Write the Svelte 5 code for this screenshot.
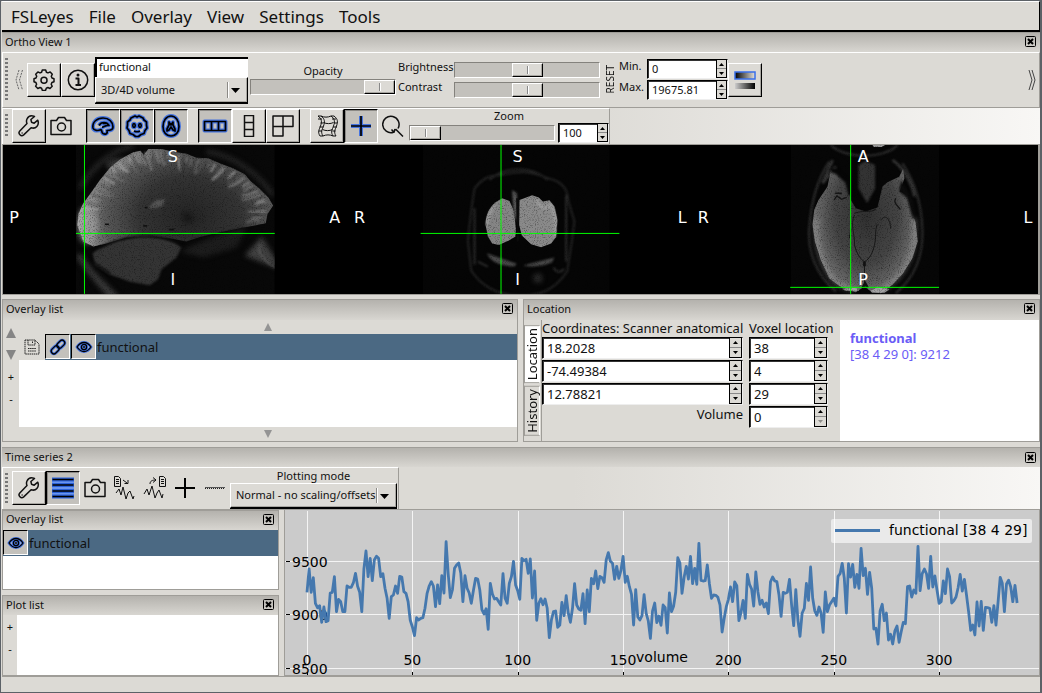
<script>
  const menus = ['FSLeyes', 'File', 'Overlay', 'View', 'Settings', 'Tools'];
  const coords = ['18.2028', '-74.49384', '12.78821'];
  const voxels = ['38', '4', '29', '0'];

  // Voxel intensity per volume, as trace depth in thirds of a plot unit
  const trace = [
    262,192,262,218,295,308,302,352,306,350,347,264,262,215,320,283,290,320,320,243,247,247,233,205,244,262,320,192,138,215,
    160,227,164,154,160,215,206,250,280,340,275,270,243,265,214,216,260,265,290,345,366,392,338,345,340,338,310,265,243,230,
    243,305,240,296,212,264,110,207,278,255,190,180,174,205,290,212,250,264,295,255,220,222,255,314,327,311,373,235,267,282,
    280,290,300,206,280,295,235,215,169,240,257,283,160,167,163,205,162,279,198,346,295,281,299,282,310,398,345,320,318,367,
    360,292,332,272,325,352,310,236,300,312,316,266,356,255,320,220,236,198,251,214,218,232,165,143,169,175,223,184,220,197,
    154,232,214,245,268,360,254,336,345,332,269,325,348,400,318,294,353,333,361,300,308,384,264,320,304,262,158,174,265,215,
    184,222,154,236,190,238,115,226,228,227,180,236,280,270,271,277,300,381,340,305,283,246,290,231,242,347,322,286,340,208,
    238,252,303,201,260,298,286,306,294,326,230,216,228,230,270,334,262,265,262,223,300,362,254,345,394,325,310,235,286,186,
    280,318,331,306,325,382,261,320,300,290,280,303,214,206,175,220,324,176,216,178,247,208,250,130,212,190,268,202,250,372,
    370,417,318,298,347,324,405,388,417,377,363,412,380,352,356,245,243,276,255,265,124,257,206,192,206,250,154,246,213,255,
    295,290,228,266,192,215,294,287,276,248,208,258,223,270,320,376,360,390,291,363,289,376,307,308,310,352,302,360,290,217,
    235,320,237,226,245,290,241,294
  ];
  const points = trace.map((d, i) => `${(22 + i * 2.107).toFixed(1)},${(d / 3 - 6).toFixed(1)}`).join(' ');
  const xTicks = [0, 50, 100, 150, 200, 250, 300];
  const yTicks = [[9500, 50], [9000, 103], [8500, 157]];

  // Cortical folds: streaks running inwards from the outline of a slice
  const sagittalRim = [[232,240],[236,205],[250,175],[270,150],[290,118],[312,90],[335,65],[360,44],[390,26],[420,17],[450,13],[485,14],[520,22],[550,28],[585,36],[620,40],[655,54],[690,68],[720,80],[745,100],[770,124],[792,150],[812,178],[800,210],[780,232]];
  function folds(rim, cx, cy, len) {
    const out = [];
    for (let i = 0; i < rim.length - 1; i++) {
      for (let k = 0; k < 3; k++) {
        const n = i * 3 + k;
        const t = (k + ((n * 7) % 5) / 6) / 3;
        const x = rim[i][0] + (rim[i + 1][0] - rim[i][0]) * t;
        const y = rim[i][1] + (rim[i + 1][1] - rim[i][1]) * t;
        const d = Math.hypot(cx - x, cy - y);
        const l = len * (0.3 + ((n * 37) % 17) / 17);
        const ux = (cx - x) / d;
        const uy = (cy - y) / d;
        const bend = ((n * 13) % 11) - 5;
        out.push({
          d: `M${x + ux * 6} ${y + uy * 6}q${ux * l * 0.5 - uy * bend} ${uy * l * 0.5 + ux * bend} ${ux * l + uy * bend} ${uy * l - ux * bend}`,
          light: (n * 5) % 3 !== 0,
          w: 4 + (n % 3) * 2,
          o: 0.12 + ((n * 29) % 11) / 28
        });
      }
    }
    return out;
  }
  const sagittalFolds = folds(sagittalRim, 530, 230, 48);
</script>

{#snippet close()}
  <button class="close" aria-label="Close">
    <svg width="11" height="11" viewBox="0 0 11 11"><rect x=".5" y=".5" width="10" height="10" rx="1" fill="none" stroke="#000" /><path d="M3 3l5 5M8 3l-5 5" stroke="#000" stroke-width="2" /></svg>
  </button>
{/snippet}

{#snippet wrench()}
  <svg class="ico" viewBox="0 0 22 22"><path d="M19.8 5.2l-3.6 3-2.7-1-.6-2.7 3.6-3C13.3.2 10.300 1.200 9 4c-.8 1.700-.6 3.200 0 4.600L1.800 16c-2.300 2.600 1.300 6.200 3.900 3.900l7.400-7.200c4.600 1.700 8.600-2.500 6.700-7.500zM3.600 18h1" /></svg>
{/snippet}

{#snippet camera()}
  <svg class="ico" viewBox="0 0 22 22"><path d="M1 5.500h5.500l2-3h6l2 3H21v14H1z" /><circle cx="11.500" cy="12" r="4" /></svg>
{/snippet}

{#snippet eye()}
  <svg class="glow small" viewBox="0 0 16 12">
    {#each ['halo', 'ink'] as layer}
      <g class={layer}><path d="M1 6c4-6 10-6 14 0c-4 6-10 6-14 0z" /><circle cx="8" cy="6" r="2.600" /></g>
    {/each}
    <circle cx="8" cy="6" r="1" fill="#000" />
  </svg>
{/snippet}

{#snippet spin(label, value, cls)}
  <span class="spin {cls}">
    <input type="text" aria-label={label} {value} />
    <span class="steps">
      <button aria-label="Increase {label}"><svg width="5" height="3" viewBox="0 0 5 3"><path d="M0 3L2.500 0 5 3z" /></svg></button>
      <button aria-label="Decrease {label}"><svg width="5" height="3" viewBox="0 0 5 3"><path d="M0 0L2.500 3 5 0z" /></svg></button>
    </span>
  </span>
{/snippet}

<div class="window">
  <nav class="menubar">
    {#each menus as m}<button>{m}</button>{/each}
  </nav>

  <header class="caption main"><span>Ortho View 1</span>{@render close()}</header>

  <div class="toolbar display">
    <i class="grip"></i>
    <button class="chev" aria-label="Scroll left"><svg width="8" height="22" viewBox="0 0 8 22"><path d="M4 1L1 11l3 10M7.500 1l-3 10 3 10" fill="none" stroke="#666" stroke-dasharray="2 1" /></svg></button>
    <button class="tool" aria-label="Display settings">
      <svg class="ico" viewBox="0 0 22 22"><path d="M9.300 1h3.400l.7 2.200 1.600.7 2.200-1 2.100 2.300-1 2.100.7 1.700 2 .7v3l-2.100.8-.7 1.700 1 2.100-2.200 2.200-2.100-1-1.600.7-.8 2.200H9.400l-.8-2.200-1.600-.7-2.200 1-2.200-2.200 1-2.100-.7-1.700L1 12.700v-3L3 9l.7-1.700-1-2.100 2.200-2.300 2.100 1 1.600-.7z" /><circle cx="11" cy="11.200" r="3" /></svg>
    </button>
    <button class="tool" aria-label="Overlay information">
      <svg class="ico" viewBox="0 0 22 22"><circle cx="11" cy="11" r="9.700" /><path d="M8.500 9.500h3v6M8.500 16h5.500" stroke-width="2" /><circle cx="11" cy="6" r="1.500" fill="#111" stroke="none" /></svg>
    </button>
    <div class="stack name">
      <input class="text" type="text" aria-label="Overlay name" value="functional" />
      <span class="combo"><select aria-label="Overlay type"><option>3D/4D volume</option></select><svg width="9" height="5" viewBox="0 0 9 5"><path d="M0 0h9L4.500 5z" /></svg></span>
    </div>
    <div class="stack opacity">
      <label for="opacity">Opacity</label>
      <input id="opacity" type="range" value="100" />
    </div>
    <div class="bricon">
      <label for="bri">Brightness</label><input id="bri" type="range" value="50" />
      <label for="con">Contrast</label><input id="con" type="range" value="50" />
    </div>
    <button class="reset">RESET</button>
    <div class="range">
      <span>Min.</span>{@render spin('Min.', '0', 'w82')}
      <span>Max.</span>{@render spin('Max.', '19675.81', 'w82')}
    </div>
    <button class="tool" aria-label="Colour map range">
      <svg width="22" height="20" viewBox="0 0 22 20">
        <defs><linearGradient id="cm1"><stop offset="0" stop-color="#000" /><stop offset="1" stop-color="#e4e2dd" /></linearGradient><linearGradient id="cm2"><stop offset="0" stop-color="#ccc" /><stop offset="1" stop-color="#000" /></linearGradient></defs>
        <rect x="1" y="2" width="20" height="7" fill="url(#cm1)" stroke="#3a6fe8" stroke-width="1.500" /><rect x="1" y="13" width="20" height="6" fill="url(#cm2)" />
      </svg>
    </button>
    <button class="chev end" aria-label="Scroll right"><svg width="8" height="22" viewBox="0 0 8 22"><path d="M1 1l3 10-3 10M4 1l3 10-3 10" fill="none" stroke="#444" /></svg></button>
  </div>

  <div class="strip">
    <div class="toolbar ortho">
      <i class="grip"></i>
      <button class="tool" aria-label="View settings">{@render wrench()}</button>
      <button class="tool flat" aria-label="Screenshot">{@render camera()}</button>
      <div class="group">
        <button class="tool on" aria-label="Sagittal view">
          <svg class="glow" viewBox="0 0 24 24">{#each ['halo', 'ink'] as layer}<g class={layer}><path d="M2 14C1 8 6 4 12 4s10 4 10 9c0 3-3 3.500-6 3.500 1 3-1.500 4.500-4 3-1.500-1-1-3-2-4-3 1.500-7 1.500-8-1.500z" /><path d="M8 11.500c2-4 8-4 10 0-3-1-5 2-7 1.500M12 9.500h3" /></g>{/each}</svg>
        </button>
        <button class="tool on" aria-label="Coronal view">
          <svg class="glow" viewBox="0 0 24 24">{#each ['halo', 'ink'] as layer}<g class={layer}><path d="M12 3l2-1 4 2 1 2 2.500 2 0 3 .5 3-2 2.500-1 3-3 1-2.500 2h-3L8 20.500l-3-1-1-3-2-2.500.5-3v-3L5 6l1-2 4-2z" /><ellipse cx="9" cy="11.500" rx="1.200" ry="1.800" /><ellipse cx="15" cy="11.500" rx="1.200" ry="1.800" /><path d="M9 17c2 1 4 1 6 0" /></g>{/each}</svg>
        </button>
        <button class="tool on" aria-label="Axial view">
          <svg class="glow" viewBox="0 0 24 24">{#each ['halo', 'ink'] as layer}<g class={layer}><path d="M12 2c5 0 8 5 8 10.500S17 22 12 22s-8-4-8-9.500S7 2 12 2z" /><path d="M10 8v3l-2 4v2l2-1 2-3 2 3 2 1v-2l-2-4V8l-2 3z" /></g>{/each}</svg>
        </button>
      </div>
      <div class="group">
        <button class="tool on" aria-label="Horizontal layout">
          <svg class="glow" viewBox="0 0 24 24">{#each ['halo', 'ink'] as layer}<g class={layer}><path d="M1.500 7.500h21v9h-21zM8.500 7.500v9M15.500 7.500v9" /></g>{/each}</svg>
        </button>
        <button class="tool" aria-label="Vertical layout"><svg class="ico" viewBox="0 0 22 22"><path d="M6.500.5h9v21h-9zM6.500 7.500h9M6.500 14.500h9" /></svg></button>
        <button class="tool" aria-label="Grid layout"><svg class="ico" viewBox="0 0 22 22"><path d="M1 1h20v10.500H1zM1 11.500V21h10V1" /></svg></button>
      </div>
      <div class="group">
        <button class="tool" aria-label="Movie mode"><svg class="ico film" viewBox="0 0 22 22"><path d="M2 1c4 3 4 6 2.500 10s-3 6-.5 10M5 1c4 3 4 6 2.500 10S4.500 17 7 21M15 1c4 3 4 6 2.500 10s-3 6-.5 10M18 1c4 3 4 6 2.500 10s-3 6-.5 10M2 1h3c3 1.500 7 1.500 10 0h3M7.500 7.500c3 1.500 7 1.500 10 0M6.500 14.500c3 1.500 7 1.500 10 0M4 21h3c3-1.500 7-1.500 10 0h3" /><path d="M2 4h4M4.500 8h3M3.500 12h4M3 16h3M16 4h4M18 8h3M17 12h4M16.500 16h3" /></svg></button>
        <button class="tool on" aria-label="Show cursor">
          <svg class="glow" viewBox="0 0 24 24">{#each ['halo', 'ink'] as layer}<g class={layer}><path d="M12 2v20M2 12h20" stroke-linecap="butt" /></g>{/each}</svg>
        </button>
        <button class="tool flat" aria-label="Reset zoom"><svg class="ico" viewBox="0 0 22 22"><path d="M11.500 17.200A8.200 8.200 0 1 1 16 13.500M9.500 14.500l2.500 2.700 1-3.200M13.500 14l7.500 7.500" /></svg></button>
      </div>
      <div class="stack zoom">
        <label for="zoom">Zoom</label>
        <div class="zoomrow">
          <input id="zoom" type="range" value="0" />
          {@render spin('Zoom level', '100', 'w51')}
        </div>
      </div>
    </div>
  </div>

  <div class="canvas">
    <svg viewBox="0 0 1036 149" width="100%">
      <defs>
        <filter id="grain" x="0" y="0" width="1" height="1" color-interpolation-filters="sRGB">
          <feTurbulence type="fractalNoise" baseFrequency=".3" numOctaves="2" seed="4" />
          <feColorMatrix values="1.100 0 0 0 .45  1.100 0 0 0 .45  1.100 0 0 0 .45  0 0 0 0 1" result="n" />
          <feComposite in="SourceGraphic" in2="n" operator="arithmetic" k1="1" />
        </filter>
        <filter id="haze" x="-.5" y="-.5" width="2" height="2" color-interpolation-filters="sRGB"><feGaussianBlur stdDeviation="8" /></filter>
        <filter id="soft" x="-.5" y="-.5" width="2" height="2" color-interpolation-filters="sRGB"><feGaussianBlur stdDeviation="2.500" /></filter>
        <radialGradient id="sag" gradientUnits="userSpaceOnUse" cx="570" cy="215" r="340" gradientTransform="translate(0 45) scale(1 .79)"><stop offset="0" stop-color="#242424" /><stop offset=".45" stop-color="#343434" /><stop offset=".75" stop-color="#5a5a5a" /><stop offset=".9" stop-color="#808080" /><stop offset="1" stop-color="#a8a8a8" /></radialGradient>
        <radialGradient id="axi" gradientUnits="userSpaceOnUse" cx="500" cy="210" r="245" gradientTransform="translate(175 0) scale(.65 1)"><stop offset="0" stop-color="#303030" /><stop offset=".6" stop-color="#444" /><stop offset="1" stop-color="#707070" /></radialGradient>
        <clipPath id="c1"><path d="M228 0h597v450H228z" /></clipPath>
        <clipPath id="c3"><path d="M274 0h446v450H274z" /></clipPath>
      </defs>

      <g transform="translate(-3 0) scale(.33333)" clip-path="url(#c1)">
        <g filter="url(#grain)">
          <path d="M228 0h597v450H228z" fill="#080808" />
          <g filter="url(#haze)" fill="none" stroke="#2a2a2a" stroke-width="12">
            <path d="M240 130C280 60 340 15 400 2M620 20c70 10 140 50 200 130" />
            <path d="M235 330c40 60 70 90 100 125M270 380l80 80" stroke="#3a3a3a" stroke-width="18" />
            <path d="M745 330l40-45 50 80z" fill="#404040" stroke="#404040" />
          </g>
          <path d="M780 300c-6 20 0 36 44 68" fill="none" stroke="#606060" stroke-width="4" filter="url(#soft)" />
          <path d="M232 240L236 205 250 175 272 145 300 105 330 68 362 42 400 22 422 17 432 30 445 12 485 12 520 20 560 26 590 38 625 40 660 55 700 70 735 88 752 108 778 130 806 158 820 182 803 208 798 235 765 242 720 250 660 262 600 276 560 290 520 282 460 275 380 278 320 296 280 305 250 290z" fill="url(#sag)" />
          {#each sagittalFolds as f}
            <path d={f.d} fill="none" stroke={f.light ? '#c8c8c8' : '#2a2a2a'} stroke-width={f.w} opacity={f.o} filter="url(#soft)" />
          {/each}
          <ellipse cx="262" cy="240" rx="32" ry="58" fill="#a8a8a8" opacity=".6" filter="url(#haze)" />
          <ellipse cx="360" cy="60" rx="40" ry="20" fill="#a8a8a8" opacity=".3" filter="url(#haze)" />
          <path d="M445 190l22-24 30-4-10 22-26 6z" fill="#545454" filter="url(#soft)" />
          <path d="M278 325C330 285 410 268 470 278c40 6 60 16 75 30l-15 30-45 35-10 30-25 18-60-10-60-22-45-30z" fill="#343434" filter="url(#soft)" />
          <path d="M300 308c50-25 100-38 150-34s80 16 100 30M270 345l60 40" fill="none" stroke="#0a0a0a" stroke-width="5" filter="url(#soft)" />
          <path d="M545 200l30 8 5 20-25 8z" fill="#181818" filter="url(#haze)" />
          <path d="M540 320c80-40 140-60 200-72l-30 60-100 30z" fill="#1c1c1c" filter="url(#haze)" />
          <path d="M435 188h8M315 238h12M430 243h12M508 254h14" stroke="#121212" stroke-width="5" />
        </g>
      </g>

      <g transform="translate(347 0) scale(.33333)">
        <g filter="url(#grain)">
          <path d="M220 0h560v450H220z" fill="#050505" />
          <g fill="none" stroke="#2c2c2c" stroke-width="6" filter="url(#soft)">
            <path d="M420 105c50-45 130-40 175 0M375 130c40-50 70-35 90-42 60-14 100-2 130 12 50 10 60 40 62 70l18 60-8 60-14 90c-40 60-90 75-150 72-60-2-110-30-138-75l-10-90 10-90z" opacity=".8" />
            <path d="M375 190v170M650 150v200M385 350l30 15M612 368c10 18 24 14 32 4" />
          </g>
          <path d="M412 325l90 32-8 8c-40-2-70-12-82-40zM520 362l95-24-8 15c-30 12-55 14-87 9z" fill="#484848" filter="url(#soft)" />
          <path d="M408 240C408 210 418 190 438 172L458 160 480 168 494 200 499 250 498 275 478 287 448 300 428 296 415 275z" fill="#858585" />
          <path d="M488 135l14 10 2 90-12-30z" fill="#585858" filter="url(#soft)" />
          <path d="M510 165L548 151 568 158 580 170 600 166 616 186 624 226 620 276 605 296 575 307 545 298 517 272 509 240z" fill="#8a8a8a" />
          <path d="M560 165c15 25 25 30 45 15l12 35v60M412 240c2-30 12-44 24-58" fill="none" stroke="#b4b4b4" stroke-width="6" opacity=".65" filter="url(#soft)" />
          <path d="M503 160l2 130" stroke="#0c0c0c" stroke-width="6" />
          <ellipse cx="565" cy="400" rx="14" ry="14" fill="#2b2b2b" filter="url(#haze)" />
        </g>
      </g>

      <g transform="translate(697 0) scale(.33333)" clip-path="url(#c3)">
        <g filter="url(#grain)">
          <path d="M274 0h446v450H274z" fill="#060606" />
          <g fill="none" stroke="#303030" stroke-width="6" filter="url(#soft)">
            <path d="M395 0c40 42 160 44 200 0M390 50c-40 60-55 130-60 200s20 140 80 190M610 55c40 60 58 130 60 200s-20 140-80 190" />
            <path d="M400 45l-30 70 40-50M580 45c30 20 60 70 66 110" stroke="#383838" stroke-width="8" />
          </g>
          <path d="M520 0h38l-10 6h-24z" fill="#999" />
          <path d="M385 125L395 75 412 80 445 110 455 165 470 190 500 200 535 188 550 125 565 112 600 95 612 72 616 100 602 140 625 150 640 200 650 235 656 290 640 340 612 385 580 420 545 445 515 440 496 425 470 442 430 430 390 400 365 345 347 290 340 240 345 195 358 165z" fill="url(#axi)" />
          <path d="M478 60l22-12 28 12 0 70-24 45-26-45z" fill="#333" filter="url(#soft)" />
          <path d="M395 75l17 5 33 30 10 40" fill="none" stroke="#060606" stroke-width="14" filter="url(#soft)" />
          <path d="M606 105L640 165 650 225 640 220 624 160 600 138z" fill="#0c0c0c" filter="url(#soft)" />
          <path d="M405 165l8-12 14 10 16-6M408 145h20M590 160c-8 14 4 20 14 34" fill="none" stroke="#161616" stroke-width="4" />
          <path d="M465 205c40-12 50 0 65-12M466 210c-14 30 2 60 0 90 6 26 20 46 30 50 16-6 26-30 30-50 6-20 0-40 8-62M545 225c16-20 28 0 30 26M496 350v70M455 250l-4 30" fill="none" stroke="#181818" stroke-width="3" />
          <path d="M352 220c-4 80 10 140 56 195l56 20M645 220c4 75-2 120-48 178l-48 38" fill="none" stroke="#b0b0b0" stroke-width="14" opacity=".4" filter="url(#haze)" />
          <path d="M430 434l40-6 10 10h-40zM515 438l20-12 36 8-15 10h-38z" fill="#b0b0b0" opacity=".8" />
          <path d="M496 350v14M490 430l8-14 8 14" stroke="#111" stroke-width="8" fill="none" />
        </g>
      </g>

      <g stroke="#00ff00" stroke-width="1">
        <path d="M81.500 0v149M73 88.500h199M498.500 0v149M418 88.500h199M848.500 0v149M788 142.500h149" />
      </g>
      <g class="anat" text-anchor="middle">
        <text x="11" y="78">P</text><text x="170" y="17">S</text><text x="170" y="140">I</text><text x="332" y="78">A</text>
        <text x="357" y="78">R</text><text x="515" y="17">S</text><text x="515" y="140">I</text><text x="680" y="78">L</text>
        <text x="701" y="78">R</text><text x="861" y="17">A</text><text x="861" y="140">P</text><text x="1026" y="78">L</text>
      </g>
    </svg>
  </div>

  <div class="docks">
    <section class="dock">
      <header class="caption"><span>Overlay list</span>{@render close()}</header>
      <div class="ovl">
        <div class="side">
          <button aria-label="Move up"><svg width="10" height="10" viewBox="0 0 10 10"><path d="M0 10L5 0l5 10z" fill="#858585" /></svg></button>
          <button aria-label="Move down"><svg width="10" height="10" viewBox="0 0 10 10"><path d="M0 0h10L5 10z" fill="#858585" /></svg></button>
          <button>+</button>
          <button>-</button>
        </div>
        <div class="listcol">
          <div class="scroll"><svg width="8" height="8" viewBox="0 0 8 8"><path d="M0 8l4-8 4 8z" fill="#949494" /></svg></div>
          <div class="list">
            <div class="row">
              <button class="mini plain" aria-label="Save overlay"><svg width="16" height="16" viewBox="0 0 16 16" fill="none" stroke="#222" stroke-dasharray="1.500 .6"><path d="M1 1h10l4 4v10H1zM4 1v5h7V1M8.500 2.500v2M4 9.500h8M4 12h8" /></svg></button>
              <button class="mini" aria-label="Link overlay">
                <svg class="glow small" viewBox="0 0 16 16">{#each ['halo', 'ink'] as layer}<g class={layer}><rect x="-4.500" y="-2.700" width="9" height="5.400" rx="2.700" transform="translate(5.200 10.800) rotate(-45)" /><rect x="-4.500" y="-2.700" width="9" height="5.400" rx="2.700" transform="translate(10.800 5.200) rotate(-45)" /></g>{/each}</svg>
              </button>
              <button class="mini" aria-label="Toggle overlay">{@render eye()}</button>
              <span>functional</span>
            </div>
          </div>
          <div class="scroll"><svg width="8" height="8" viewBox="0 0 8 8"><path d="M0 0h8L4 8z" fill="#949494" /></svg></div>
        </div>
      </div>
    </section>

    <section class="dock">
      <header class="caption"><span>Location</span>{@render close()}</header>
      <div class="loc">
        <div class="tabs"><button class="tab sel">Location</button><button class="tab">History</button></div>
        <div class="cols">
          <div class="col world">
            <span class="head">Coordinates: Scanner anatomical</span>
            {#each coords as c, i}{@render spin('Coordinate ' + (i + 1), c, 'big')}{/each}
            <span class="vol">Volume</span>
          </div>
          <div class="col voxel">
            <span class="head">Voxel location</span>
            {#each voxels as v, i}{@render spin('Voxel ' + (i + 1), v, i === 3 ? 'big floor' : 'big')}{/each}
          </div>
        </div>
        <div class="info"><b>functional</b><span>[38 4 29 0]: 9212</span></div>
      </div>
    </section>
  </div>

  <header class="caption main ts"><span>Time series 2</span>{@render close()}</header>
  <div class="strip">
    <div class="toolbar series">
      <i class="grip"></i>
      <button class="tool" aria-label="Plot settings">{@render wrench()}</button>
      <button class="tool on" aria-label="Overlay list">
        <svg class="glow" viewBox="0 0 24 24"><path d="M1 3h22v18H1z" fill="#6a95ee" /><path d="M1 3.500h22M1 9h22M1 15h22M1 20.500h22" stroke="#2c62d8" stroke-width="4" /><path d="M1.500 3.500h21M1.500 9h21M1.500 15h21M1.500 20.500h21" stroke="#000" stroke-width="1.500" /></svg>
      </button>
      <button class="icon" aria-label="Screenshot">{@render camera()}</button>
      <button class="icon" aria-label="Import data"><svg width="24" height="24" viewBox="0 0 24 24" fill="none" stroke="#111"><path d="M1.500.5h4l2 2v8h-6zM3 3.500h3M3 5.500h3M3 7.500h3M10 4l4 3M11.500 7.500H15V4M3 17l3-4 2 6 2-8 3 12 2-6 2-2 3 8 1-3" /></svg></button>
      <button class="icon" aria-label="Export data"><svg width="24" height="24" viewBox="0 0 24 24" fill="none" stroke="#111"><path d="M16.500.5h4l2 2v8h-6zM18 3.500h3M18 5.500h3M18 7.500h3M7 8c0-3 2-4 6-4M10 1.500L13 4l-3 2.500M1 18l3-5 2 6 3-9 3 12 2-5 2-3 3 8 1-4" /></svg></button>
      <button class="icon" aria-label="Add"><svg width="22" height="22" viewBox="0 0 22 22"><path d="M11 1v20M1 11h20" stroke="#000" stroke-width="2" /></svg></button>
      <button class="icon" aria-label="Remove"><svg width="22" height="22" viewBox="0 0 22 22"><path d="M1 10.500h20" stroke="#555" /><path d="M1 11.500h20" stroke="#222" stroke-dasharray="1 1" /></svg></button>
      <div class="mode">
        <label for="mode">Plotting mode</label>
        <span class="combo"><select id="mode"><option>Normal - no scaling/offsets</option></select><svg width="9" height="5" viewBox="0 0 9 5"><path d="M0 0h9L4.500 5z" /></svg></span>
      </div>
    </div>
  </div>

  <div class="lower">
    <aside>
      <section class="dock">
        <header class="caption"><span>Overlay list</span>{@render close()}</header>
        <div class="list">
          <div class="row"><button class="mini" aria-label="Toggle overlay">{@render eye()}</button><span>functional</span></div>
        </div>
      </section>
      <section class="dock">
        <header class="caption"><span>Plot list</span>{@render close()}</header>
        <div class="plotlist">
          <div class="side"><button>+</button><button>-</button></div>
          <div class="list"></div>
        </div>
      </section>
    </aside>
    <div class="plot">
      <svg viewBox="0 0 754 164" width="100%" overflow="visible">
        <g stroke="#f4f4f4">
          {#each xTicks as t}<line x1={Math.round(22 + t * 2.107) + 0.5} x2={Math.round(22 + t * 2.107) + 0.5} y1="0" y2="164" />{/each}
          {#each yTicks as [v, y]}<line x1="0" x2="754" y1={y + 0.5} y2={y + 0.5} />{/each}
        </g>
        <g stroke="#000">
          {#each xTicks as t}<line x1={Math.round(22 + t * 2.107) + 0.5} x2={Math.round(22 + t * 2.107) + 0.5} y1="161" y2="164" />{/each}
          {#each yTicks as [v, y]}<line x1="1" x2="5" y1={y + 0.5} y2={y + 0.5} />{/each}
        </g>
        {#each yTicks as [v, y]}<text x="7" y={y + 6}>{v}</text>{/each}
        {#each xTicks as t}<text x={22 + t * 2.107} y="154" text-anchor="middle">{t}</text>{/each}
        <text x="377" y="151" text-anchor="middle">volume</text>
        <polyline {points} fill="none" stroke="#4578ae" stroke-width="2.800" stroke-linejoin="round" />
        <rect x="546" y="8" width="201" height="24" rx="2" fill="#fff" fill-opacity=".6" />
        <path d="M550 19.500h45" stroke="#4578ae" stroke-width="2.800" />
        <text x="604" y="24">functional [38 4 29]</text>
      </svg>
    </div>
  </div>
  <footer></footer>
</div>

<style>
  :global(body) { margin: 0; background: #dcdad5; }
  .window { --bg: #dcdad5; --edge: #9f9d98; box-sizing: border-box; min-height: 100vh; display: flex; flex-direction: column; background: var(--bg); border: 1px solid #5c6167; border-right-width: 2px; padding-left: 1px; font: 11px/14px "Noto Sans", sans-serif; color: #111; }
  .window :global(*) { box-sizing: border-box; }
  button, input, select { font: inherit; color: inherit; margin: 0; padding: 0; border: 0; border-radius: 0; background: none; min-width: 0; }
  svg { display: block; flex: none; }
  .menubar { display: flex; gap: 15px; padding: 2px 9px 0; height: 31px; border-top: 1px solid #fff; border-bottom: 2px solid #000; border-right: 1px solid #000; align-items: center; font-size: 17px; line-height: 24px; }
  .caption { display: flex; align-items: center; justify-content: space-between; height: 20px; flex: none; padding: 0 4px 2px 3px; background: linear-gradient(#b4b2ad, #d8d6d1); border-top: 1px solid var(--edge); }
  .caption.ts { margin-top: 5px; padding-bottom: 0; }
  .close { width: 11px; height: 11px; }
  .toolbar { display: flex; align-items: center; background: var(--bg); border-top: 1px solid #fff; border-left: 1px solid #fff; }
  .display { height: 56px; padding-bottom: 1px; border-bottom: 1px solid var(--edge); border-right: 1px solid var(--edge); }
  .grip { align-self: stretch; width: 3px; margin: 5px 2px; background: repeating-linear-gradient(#777 0 2px, transparent 2px 4px); }
  .ortho .grip, .series .grip { margin-right: 4px; }
  .chev { width: 8px; margin: 0 4px 0 5px; }
  .chev.end { margin-left: auto; margin-right: 3px; }
  .tool { width: 34px; height: 34px; flex: none; display: grid; place-items: center; border: 1px solid; border-color: #fff #000 #000 #fff; box-shadow: inset -1px -1px #a8a6a1; }
  .tool.on { background: #c3c1bc; border-color: #000 #fff #fff #000; box-shadow: inset 1px 1px #8c8a86; }
  .tool.flat { width: 30px; border-color: transparent; box-shadow: none; }
  .icon { width: 30px; height: 34px; display: grid; place-items: center; flex: none; }
  .ico { width: 22px; height: 22px; fill: none; stroke: #111; stroke-width: 1.500; stroke-linejoin: round; }
  .film { stroke-width: 1; }
  .glow { width: 24px; height: 24px; overflow: visible; }
  .glow.small { width: 16px; height: 16px; }
  .halo { fill: none; stroke: #2f66e6; stroke-width: 4; opacity: .85; stroke-linejoin: round; }
  .ink { fill: none; stroke: #000; stroke-width: 1.700; stroke-linejoin: round; }
  .small .halo { stroke-width: 3; }
  .small .ink { stroke-width: 1.300; }
  .group { display: flex; margin-left: 10px; }
  .stack { display: flex; flex-direction: column; }
  .stack label, .mode label { text-align: center; }
  .name { width: 153px; }
  .text { width: 100%; height: 20px; background: #fff; border: 1px solid #000; border-width: 2px 0 0 2px; padding: 0 2px 2px; }
  .combo { position: relative; display: block; height: 26px; border: 1px solid; border-color: #fff #000 #000 #fff; box-shadow: inset -1px -1px #a8a6a1, 0 1px #000; }
  .combo select { appearance: none; width: 100%; height: 100%; padding: 0 18px 0 5px; }
  .combo svg { position: absolute; right: 7px; top: 10px; }
  .combo::after { content: ""; position: absolute; right: 18px; top: 4px; bottom: 4px; border-left: 1px solid #8c8a86; border-right: 1px solid #fff; pointer-events: none; }
  input[type="range"] { appearance: none; width: 146px; height: 16px; background: #c3c1bc; border: 1px solid; border-color: #84827d #fff #fff #84827d; }
  input[type="range"]::-webkit-slider-thumb { appearance: none; width: 31px; height: 14px; border: 1px solid; border-color: #fff #000 #000 #fff; background: linear-gradient(#888, #888) 14px 2px / 1px 8px no-repeat, linear-gradient(#fff, #fff) 15px 2px / 1px 8px no-repeat, #dcdad5; box-shadow: inset -1px -1px #a8a6a1; }
  .opacity { margin: 0 2px; gap: 1px; }
  .bricon { display: grid; grid-template-columns: 56px auto; row-gap: 4px; align-items: center; }
  .bricon label { height: 16px; margin-top: -4px; }
  .reset { writing-mode: vertical-rl; transform: rotate(180deg); font-size: 10px; margin: 0 2px 0 3px; }
  .range { display: grid; grid-template-columns: 28px auto; row-gap: 1px; }
  .w82 { width: 81px; height: 20px; }
  .w51 { width: 51px; height: 20px; }
  .spin { display: flex; background: #fff; border: 1px solid; border-color: #000 #eee #eee #000; box-shadow: inset 1px 1px #333; padding: 1px 0 0 1px; }
  .spin input { flex: 1; width: 0; padding: 0 0 1px 3px; }
  .steps { width: 11px; display: flex; flex-direction: column; background: var(--bg); border-left: 1px solid #000; border-right: 1px solid #000; border-bottom: 1px solid #000; margin-top: -1px; }
  .steps button { flex: 1; display: grid; place-items: center; }
  .steps button + button { border-top: 1px solid #888; }
  .floor .steps button + button svg { opacity: .35; }
  .strip { display: flex; background: linear-gradient(90deg, var(--bg) 55%, #f8f7f5); }
  .ortho { height: 36px; padding-bottom: 1px; border-right: 1px solid var(--edge); }
  .zoom { margin-left: 1px; align-self: stretch; }
  .zoomrow { display: flex; gap: 3px; align-items: center; }
  .canvas { background: #000; border: solid var(--edge); border-width: 1px 2px 1px 1px; }
  .anat { font: 16px "DejaVu Sans", sans-serif; fill: #fff; }
  .docks { display: flex; gap: 5px; margin-top: 4px; height: 143px; }
  .docks > .dock { flex: 1; display: flex; flex-direction: column; border: 1px solid var(--edge); border-top: 0; }
  .docks > .dock:first-child { flex: 0 1 516px; }
  .docks .caption { height: 21px; }
  .ovl, .loc, .plotlist { display: flex; flex: 1; min-height: 0; }
  .side { width: 16px; display: flex; flex-direction: column; padding-top: 2px; }
  .side button { height: 22px; display: grid; place-items: center; }
  .listcol { flex: 1; display: flex; flex-direction: column; }
  .scroll { height: 14px; display: grid; place-items: center; }
  .list { flex: 1; background: #fff; font-size: 13px; line-height: 18px; }
  .row { display: flex; align-items: center; height: 26px; background: #4b6983; }
  .mini { width: 25px; height: 25px; margin-right: 1px; display: grid; place-items: center; background: #c3c1bc; border: 1px solid; border-color: #000 #fff #fff #000; flex: none; }
  .mini.plain { width: 26px; height: 26px; margin: 0; background: var(--bg); border: 0; }
  .tabs { width: 18px; padding: 5px 1px 0 0; display: flex; flex-direction: column; gap: 3px; border-right: 1px solid var(--edge); }
  .tab { writing-mode: vertical-rl; transform: rotate(180deg); font-size: 13px; line-height: 14px; border: 1px solid var(--edge); border-left-color: #fff; width: 16px; padding: 2px 0; }
  .tab.sel { background: #fff; }
  .cols { display: flex; gap: 6px; }
  .col { display: flex; flex-direction: column; font-size: 13px; }
  .world { width: 201px; }
  .voxel { width: 86px; }
  .voxel .spin { width: 79px; }
  .head { height: 17px; line-height: 17px; white-space: nowrap; }
  .big { height: 22px; margin-bottom: 1px; }
  .big .steps { width: 13px; }
  .vol { text-align: right; line-height: 16px; }
  .info { flex: 1; background: #fff; color: #6a5cf6; font-size: 13px; line-height: 16px; padding: 10px; margin-left: 5px; display: flex; flex-direction: column; }
  .series { height: 42px; border-right: 1px solid var(--edge); padding-right: 1px; }
  .mode { display: flex; flex-direction: column; width: 167px; }
  .mode label { height: 14px; }
  .mode .combo { height: 25px; }
  .lower { display: flex; gap: 5px; flex: 1; border-top: 1px solid var(--edge); }
  aside { width: 277px; display: flex; flex-direction: column; gap: 5px; }
  aside .dock { flex: 1; display: flex; flex-direction: column; border: 1px solid var(--edge); border-top: 0; }
  .plotlist .side { width: 14px; padding-top: 1px; }
  .plot { flex: 1; padding-top: 1px; background: #cbcbcb; border: solid var(--edge); border-width: 0 1px 1px 1px; font: 14px "DejaVu Sans", sans-serif; }
  footer { height: 16px; border-top: 1px solid var(--edge); }
</style>
